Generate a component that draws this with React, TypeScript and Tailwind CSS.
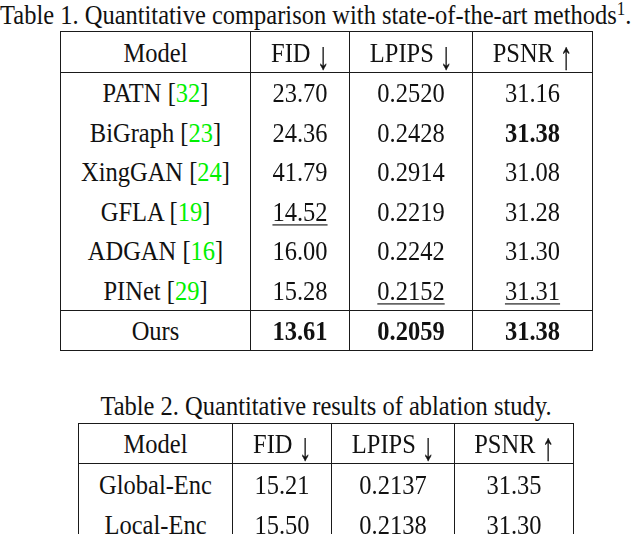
import React from "react";

type Val = { v: string; bold?: boolean; under?: boolean };
type Row = { model: string; cite?: string; cells: Val[] };

const sota: Row[] = [
  { model: "PATN", cite: "32", cells: [{ v: "23.70" }, { v: "0.2520" }, { v: "31.16" }] },
  { model: "BiGraph", cite: "23", cells: [{ v: "24.36" }, { v: "0.2428" }, { v: "31.38", bold: true }] },
  { model: "XingGAN", cite: "24", cells: [{ v: "41.79" }, { v: "0.2914" }, { v: "31.08" }] },
  { model: "GFLA", cite: "19", cells: [{ v: "14.52", under: true }, { v: "0.2219" }, { v: "31.28" }] },
  { model: "ADGAN", cite: "16", cells: [{ v: "16.00" }, { v: "0.2242" }, { v: "31.30" }] },
  { model: "PINet", cite: "29", cells: [{ v: "15.28" }, { v: "0.2152", under: true }, { v: "31.31", under: true }] },
];

const ours: Row = {
  model: "Ours",
  cells: [
    { v: "13.61", bold: true },
    { v: "0.2059", bold: true },
    { v: "31.38", bold: true },
  ],
};

const ablation: Row[] = [
  { model: "Global-Enc", cells: [{ v: "15.21" }, { v: "0.2137" }, { v: "31.35" }] },
  { model: "Local-Enc", cells: [{ v: "15.50" }, { v: "0.2138" }, { v: "31.30" }] },
];

const headers = [
  { label: "FID", arrow: "↓" },
  { label: "LPIPS", arrow: "↓" },
  { label: "PSNR", arrow: "↑" },
];

// the source figure is a little taller than wide, so stretch the glyphs a bit
function Tall({ children }: { children: React.ReactNode }) {
  return (
    <span className="inline-block origin-[50%_22px] scale-y-[1.12] whitespace-nowrap">{children}</span>
  );
}

function Cell({ width, last, children }: { width: string; last?: boolean; children: React.ReactNode }) {
  return (
    <div
      className={`flex h-full shrink-0 items-center justify-center pt-[3px] leading-[28px] ${width} ${
        last ? "" : "border-r border-[#1a1a1a]"
      }`}
    >
      <Tall>{children}</Tall>
    </div>
  );
}

function Value({ val }: { val: Val }) {
  return (
    <span
      className={`${val.bold ? "font-bold" : ""} ${
        val.under ? "underline decoration-1 underline-offset-[3px]" : ""
      }`}
    >
      {val.v}
    </span>
  );
}

function TableRow({
  row,
  widths,
  className,
}: {
  row: Row;
  widths: string[];
  className: string;
}) {
  return (
    <div className={`flex ${className}`}>
      <Cell width={widths[0]}>
        {row.model}
        {row.cite ? (
          <>
            {" "}[<span className="text-[#00f000]">{row.cite}</span>]
          </>
        ) : null}
      </Cell>
      {row.cells.map((c, i) => (
        <Cell key={i} width={widths[i + 1]} last={i === 2}>
          <Value val={c} />
        </Cell>
      ))}
    </div>
  );
}

function HeaderRow({ widths, className }: { widths: string[]; className: string }) {
  return (
    <div className={`flex border-b border-[#1a1a1a] ${className}`}>
      <Cell width={widths[0]}>Model</Cell>
      {headers.map((h, i) => (
        <Cell key={h.label} width={widths[i + 1]} last={i === 2}>
          {h.label}{" "}
          <span className="inline-block origin-[50%_6px] scale-y-[1.4] text-[#111] will-change-transform [-webkit-text-stroke:0.3px_#111]">
            {h.arrow}
          </span>
        </Cell>
      ))}
    </div>
  );
}

export default function App() {
  const w1 = ["w-[190px]", "w-[99px]", "w-[123px]", "w-[119px]"];
  const w2 = ["w-[154px]", "w-[99px]", "w-[123px]", "w-[118px]"];

  return (
    <div
      className="h-[534px] w-[640px] overflow-hidden bg-white text-[24.5px] text-[#111]"
      style={{ fontFamily: '"Liberation Serif", "Times New Roman", serif' }}
    >
      <div className="mb-[1px] whitespace-nowrap pt-[2px] leading-[28px]">
        <Tall>
          Table 1. Quantitative comparison with state-of-the-art methods
          <sup className="text-[17px]">1</sup>.
        </Tall>
      </div>

      <div className="ml-[60px] w-[533px] border border-[#1a1a1a]">
        <HeaderRow widths={w1} className="h-[41px]" />
        {sota.map((r) => (
          <TableRow key={r.model} row={r} widths={w1} className="h-[39.5px]" />
        ))}
        <TableRow row={ours} widths={w1} className="h-[40px] border-t border-[#1a1a1a]" />
      </div>

      <div className="mb-[2px] ml-[78px] mt-[42px] w-[496px] text-center leading-[28px]">
        <Tall>Table 2. Quantitative results of ablation study.</Tall>
      </div>

      <div className="ml-[78px] w-[496px] border border-[#1a1a1a]">
        <HeaderRow widths={w2} className="h-[40px]" />
        {ablation.map((r) => (
          <TableRow key={r.model} row={r} widths={w2} className="h-[40px]" />
        ))}
      </div>
    </div>
  );
}
